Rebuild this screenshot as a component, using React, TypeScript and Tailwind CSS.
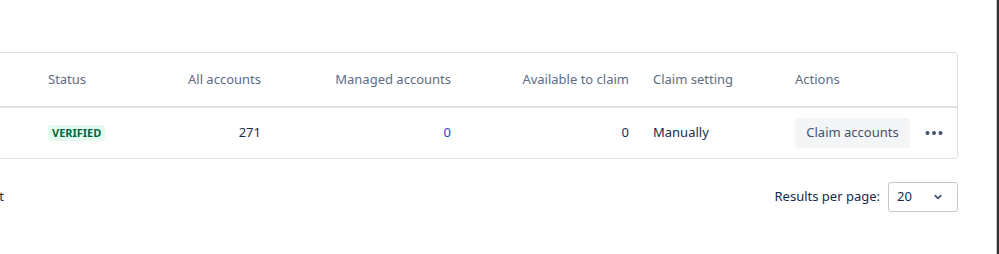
const FONT = "font-['Segoe_UI','Noto_Sans',sans-serif]";

function MoreDots() {
  return (
    <svg width="18" height="6" viewBox="0 0 18 6" className="text-[#42526e]">
      <circle cx="2.5" cy="3" r="2" fill="currentColor" />
      <circle cx="9" cy="3" r="2" fill="currentColor" />
      <circle cx="15.5" cy="3" r="2" fill="currentColor" />
    </svg>
  );
}

function Chevron() {
  return (
    <svg width="10" height="10" viewBox="0 0 10 10" className="text-[#42526e]">
      <path
        d="M2.2 3.6 L5 6.3 L7.8 3.6"
        fill="none"
        stroke="currentColor"
        strokeWidth="1.8"
        strokeLinecap="round"
        strokeLinejoin="round"
      />
    </svg>
  );
}

const COLS =
  "grid grid-cols-[339px_110px_119px_190px_178px_150px_170px]";

export default function App() {
  return (
    <div className={`flex h-[254px] w-[999px] overflow-hidden bg-white ${FONT}`}>
      <div className="flex-1 overflow-hidden">
        <div className="ml-[-300px] w-[1258px] pt-[52px] text-[13px]">
          <div className="rounded-[3px] border border-[#dfe1e6]">
            {/* header */}
            <div className={`${COLS} h-[53px] items-center text-[#5e6c84]`}>
              <div className="px-2" />
              <div className="px-2">Status</div>
              <div className="px-2 text-right">All accounts</div>
              <div className="px-2 text-right">Managed accounts</div>
              <div className="px-2 text-right">Available to claim</div>
              <div className="pl-4 pr-2">Claim setting</div>
              <div className="px-2">Actions</div>
            </div>
            <div className="h-[2px] bg-[#dfe1e6]" />
            {/* body */}
            <div className={`${COLS} h-[50px] items-center text-[#172b4d]`}>
              <div className="px-2" />
              <div className="px-2">
                <span className="inline-flex h-[16px] items-center rounded-[3px] bg-[#e3fcef] px-[4px] text-[11px] font-bold leading-none text-[#006644]">
                  VERIFIED
                </span>
              </div>
              <div className="px-2 text-right">271</div>
              <div className="px-2 text-right text-[#0052cc]">0</div>
              <div className="px-2 text-right">0</div>
              <div className="pl-4 pr-2">Manually</div>
              <div className="flex items-center px-2">
                <button className="flex h-[30px] w-[115px] items-center justify-center rounded-[3px] bg-[#f4f5f7] text-[#42526e]">
                  Claim accounts
                </button>
                <div className="ml-[15px] flex h-[30px] items-center">
                  <MoreDots />
                </div>
              </div>
            </div>
          </div>

          {/* footer */}
          <div className="mt-[23px] flex items-center justify-between">
            <div className="w-[304px] text-right text-[#172b4d]">1 account</div>
            <div className="flex items-center gap-2 text-[#172b4d]">
              <span>Results per page:</span>
              <div className="flex h-[30px] w-[70px] items-center justify-between rounded-[3px] border border-[#c1c7d0] pl-2 pr-[14px]">
                <span>20</span>
                <Chevron />
              </div>
            </div>
          </div>
        </div>
      </div>
      <div className="w-[1px] bg-[#c8c8c8]" />
      <div className="w-[2px] bg-[#333333]" />
    </div>
  );
}
